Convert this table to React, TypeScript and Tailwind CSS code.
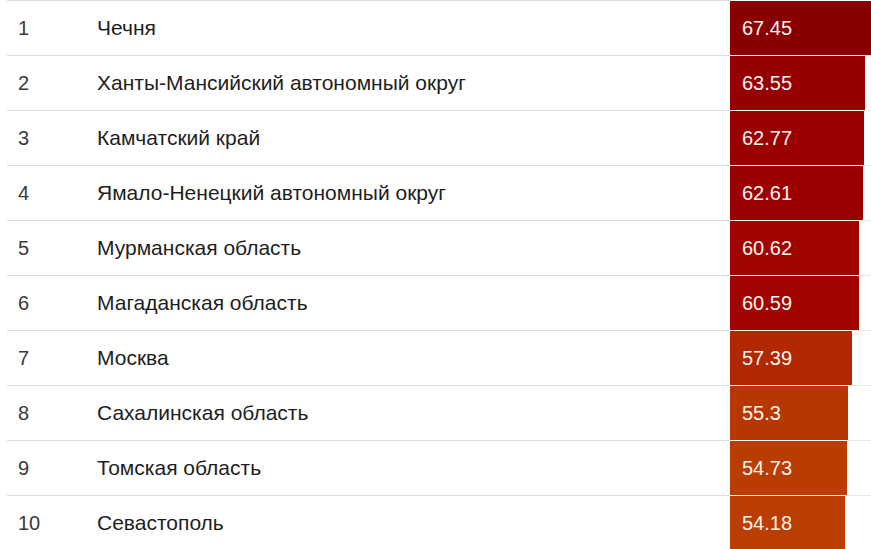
const rows = [
  { rank: 1, name: 'Чечня', value: '67.45', color: '#8a0000' },
  { rank: 2, name: 'Ханты-Мансийский автономный округ', value: '63.55', color: '#970000' },
  { rank: 3, name: 'Камчатский край', value: '62.77', color: '#9a0000' },
  { rank: 4, name: 'Ямало-Ненецкий автономный округ', value: '62.61', color: '#9b0000' },
  { rank: 5, name: 'Мурманская область', value: '60.62', color: '#a10301' },
  { rank: 6, name: 'Магаданская область', value: '60.59', color: '#a10301' },
  { rank: 7, name: 'Москва', value: '57.39', color: '#b02700' },
  { rank: 8, name: 'Сахалинская область', value: '55.3', color: '#b63700' },
  { rank: 9, name: 'Томская область', value: '54.73', color: '#b93c00' },
  { rank: 10, name: 'Севастополь', value: '54.18', color: '#ba3e00' },
]

export default function App() {
  return (
    <div className="w-[871px] h-[549px] overflow-hidden bg-white pl-[7px] font-['Liberation_Sans',Arial,sans-serif] text-[20px]">
      {rows.map((r) => (
        <div key={r.rank} className="flex h-[55px]">
          <div className="w-[90px] shrink-0 pl-[11px] flex items-center border-t border-[#dcdcdc] text-[#3a3a3a]">
            {r.rank}
          </div>
          <div className="w-[633px] shrink-0 flex items-center border-t border-[#dcdcdc] text-[21px] text-[#1e1e1e]">
            {r.name}
          </div>
          <div className="flex-1 min-w-0 flex pt-px overflow-hidden">
            <div
              className="h-full shrink-0 flex items-center pl-[12px] text-[#fff4f0]"
              style={{ width: `${parseFloat(r.value) * 2.13}px`, backgroundColor: r.color }}
            >
              {r.value}
            </div>
            <div className="flex-1 -mt-px border-t border-[#e6e6e6]" />
          </div>
        </div>
      ))}
    </div>
  )
}
